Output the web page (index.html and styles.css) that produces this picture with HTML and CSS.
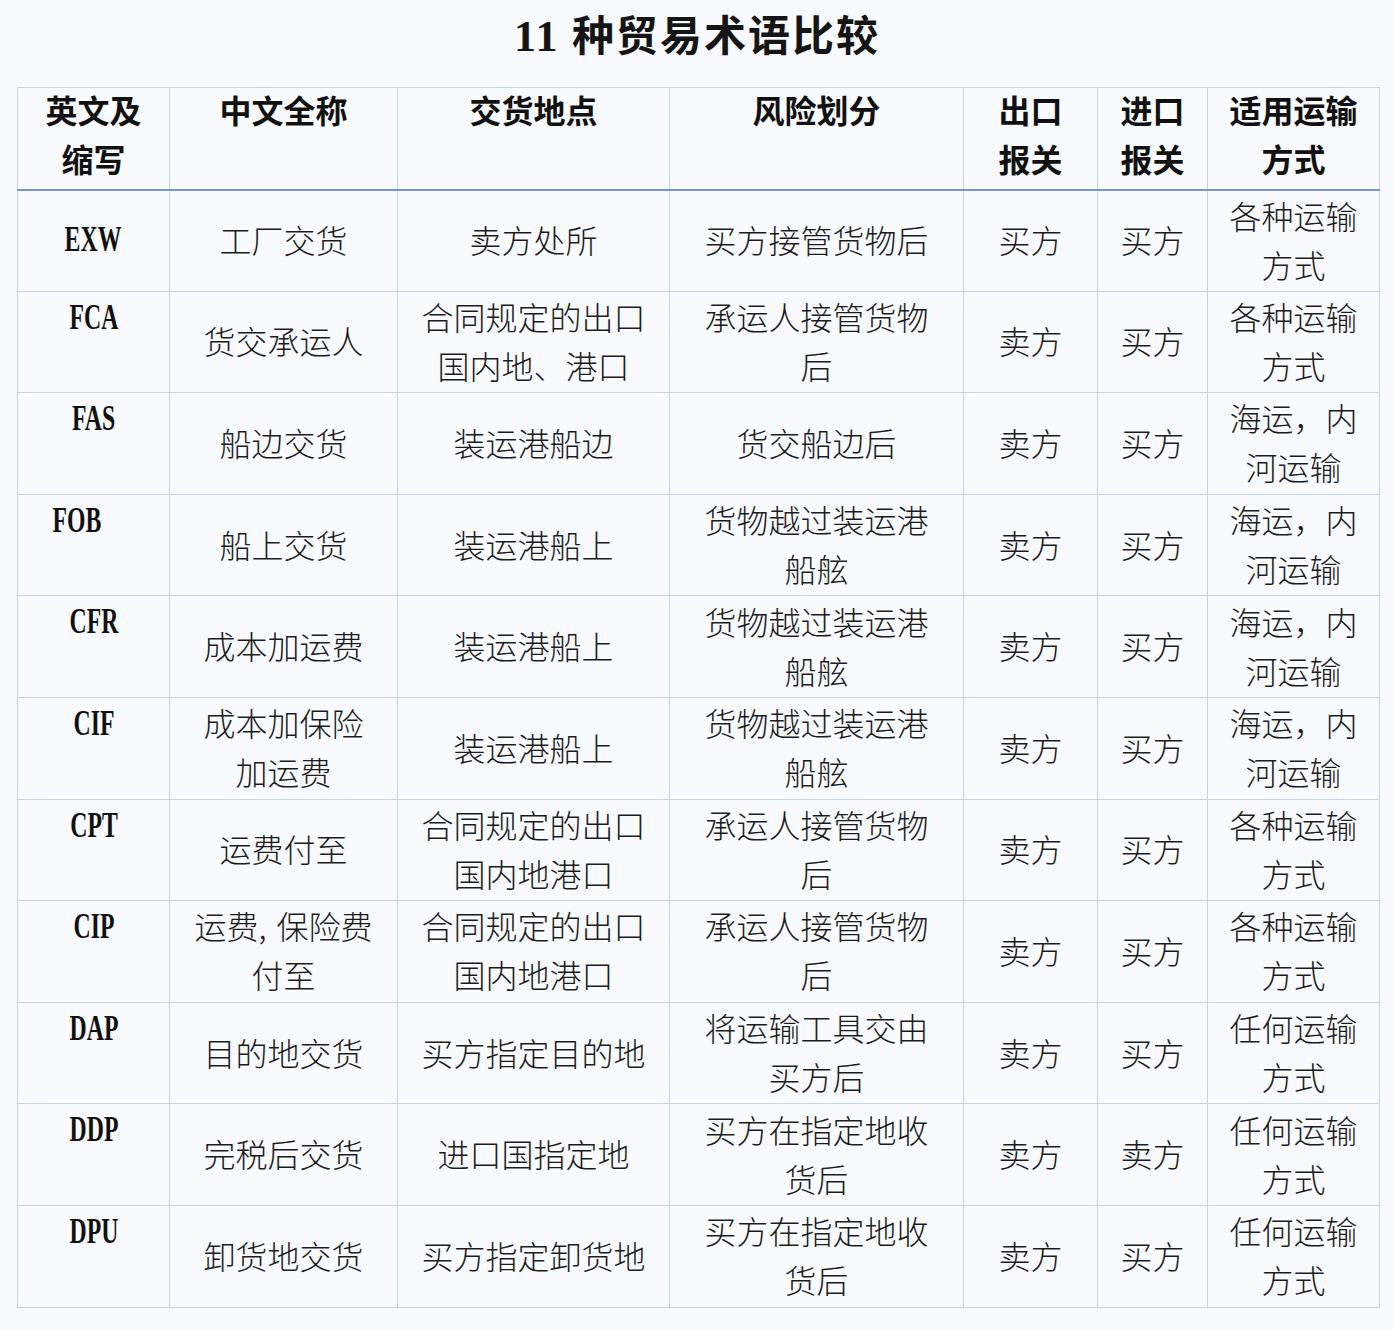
FILE: index.html
```html
<!DOCTYPE html>
<html lang="zh-CN">
<head>
<meta charset="utf-8">
<title>11 种贸易术语比较</title>
<link rel="stylesheet" href="styles.css">
</head>
<body>
<h1 class="title"><span class="title-num">11</span> 种贸易术语比较</h1>
<table class="terms">
  <colgroup>
    <col class="c1"><col class="c2"><col class="c3"><col class="c4"><col class="c5"><col class="c6"><col class="c7">
  </colgroup>
  <thead>
    <tr>
      <th><div class="th-in">英文及<br>缩写</div></th>
      <th><div class="th-in">中文全称</div></th>
      <th><div class="th-in">交货地点</div></th>
      <th><div class="th-in">风险划分</div></th>
      <th><div class="th-in">出口<br>报关</div></th>
      <th><div class="th-in">进口<br>报关</div></th>
      <th><div class="th-in">适用运输<br>方式</div></th>
    </tr>
  </thead>
  <tbody>
    <tr>
      <td class="code code-mid"><span class="code-txt">EXW</span></td>
      <td>工厂交货</td>
      <td>卖方处所</td>
      <td>买方接管货物后</td>
      <td>买方</td>
      <td>买方</td>
      <td>各种运输<br>方式</td>
    </tr>
    <tr>
      <td class="code"><span class="code-txt">FCA</span></td>
      <td>货交承运人</td>
      <td>合同规定的出口<br>国内地、港口</td>
      <td>承运人接管货物<br>后</td>
      <td>卖方</td>
      <td>买方</td>
      <td>各种运输<br>方式</td>
    </tr>
    <tr>
      <td class="code"><span class="code-txt">FAS</span></td>
      <td>船边交货</td>
      <td>装运港船边</td>
      <td>货交船边后</td>
      <td>卖方</td>
      <td>买方</td>
      <td>海运，内<br>河运输</td>
    </tr>
    <tr>
      <td class="code code-left"><span class="code-txt">FOB</span></td>
      <td>船上交货</td>
      <td>装运港船上</td>
      <td>货物越过装运港<br>船舷</td>
      <td>卖方</td>
      <td>买方</td>
      <td>海运，内<br>河运输</td>
    </tr>
    <tr>
      <td class="code"><span class="code-txt">CFR</span></td>
      <td>成本加运费</td>
      <td>装运港船上</td>
      <td>货物越过装运港<br>船舷</td>
      <td>卖方</td>
      <td>买方</td>
      <td>海运，内<br>河运输</td>
    </tr>
    <tr>
      <td class="code"><span class="code-txt">CIF</span></td>
      <td>成本加保险<br>加运费</td>
      <td>装运港船上</td>
      <td>货物越过装运港<br>船舷</td>
      <td>卖方</td>
      <td>买方</td>
      <td>海运，内<br>河运输</td>
    </tr>
    <tr>
      <td class="code"><span class="code-txt">CPT</span></td>
      <td>运费付至</td>
      <td>合同规定的出口<br>国内地港口</td>
      <td>承运人接管货物<br>后</td>
      <td>卖方</td>
      <td>买方</td>
      <td>各种运输<br>方式</td>
    </tr>
    <tr>
      <td class="code"><span class="code-txt">CIP</span></td>
      <td>运费<span class="comma">,</span>保险费<br>付至</td>
      <td>合同规定的出口<br>国内地港口</td>
      <td>承运人接管货物<br>后</td>
      <td>卖方</td>
      <td>买方</td>
      <td>各种运输<br>方式</td>
    </tr>
    <tr>
      <td class="code"><span class="code-txt">DAP</span></td>
      <td>目的地交货</td>
      <td>买方指定目的地</td>
      <td>将运输工具交由<br>买方后</td>
      <td>卖方</td>
      <td>买方</td>
      <td>任何运输<br>方式</td>
    </tr>
    <tr>
      <td class="code"><span class="code-txt">DDP</span></td>
      <td>完税后交货</td>
      <td>进口国指定地</td>
      <td>买方在指定地收<br>货后</td>
      <td>卖方</td>
      <td>卖方</td>
      <td>任何运输<br>方式</td>
    </tr>
    <tr>
      <td class="code"><span class="code-txt">DPU</span></td>
      <td>卸货地交货</td>
      <td>买方指定卸货地</td>
      <td>买方在指定地收<br>货后</td>
      <td>卖方</td>
      <td>买方</td>
      <td>任何运输<br>方式</td>
    </tr>
  </tbody>
</table>
</body>
</html>
```

FILE: styles.css
```css
html, body {
  margin: 0;
  padding: 0;
  background: #f8fafd;
}

body {
  width: 1394px;
  height: 1330px;
  overflow: hidden;
  font-family: "Noto Sans CJK SC", sans-serif;
  color: #1c1c1c;
}

.title {
  margin: 0;
  height: 87px;
  line-height: 74px;
  text-align: center;
  font-family: "Liberation Serif", "Noto Sans CJK SC", serif;
  font-size: 42px;
  font-weight: 700;
  color: #151515;
  letter-spacing: 2px;
}

.title-num {
  font-family: "Liberation Serif", serif;
  font-size: 44px;
}

.terms {
  margin-left: 17px;
  width: 1362px;
  border-collapse: collapse;
  table-layout: fixed;
}

.c1 { width: 152px; }
.c2 { width: 228px; }
.c3 { width: 272px; }
.c4 { width: 294px; }
.c5 { width: 134px; }
.c6 { width: 110px; }
.c7 { width: 172px; }

.terms th,
.terms td {
  border: 1px solid #c6d3e3;
  padding: 0;
  text-align: center;
  white-space: nowrap;
}

.terms thead tr {
  height: 102px;
}

.terms th {
  vertical-align: top;
  font-size: 32px;
  line-height: 49px;
  font-weight: 700;
  color: #111;
  border-bottom: 2px solid #7396c2;
}

.th-in {
  margin-top: -3px;
}

.terms tbody tr {
  height: 101.6px;
}

.terms td {
  vertical-align: middle;
  font-size: 32px;
  line-height: 49px;
  font-weight: 300;
  padding-bottom: 2px;
}

.terms td.code {
  vertical-align: top;
  line-height: 46px;
  padding-bottom: 0;
}

.terms td.code-mid {
  vertical-align: middle;
  padding-bottom: 6px;
}

.terms td.code-left {
  padding-right: 32px;
}

.code-txt {
  display: inline-block;
  font-family: "Liberation Serif", serif;
  font-weight: 700;
  font-size: 36px;
  line-height: 44px;
  transform: scaleX(0.66);
  color: #111;
}

.comma {
  display: inline-block;
  width: 18px;
  text-align: left;
}
```
